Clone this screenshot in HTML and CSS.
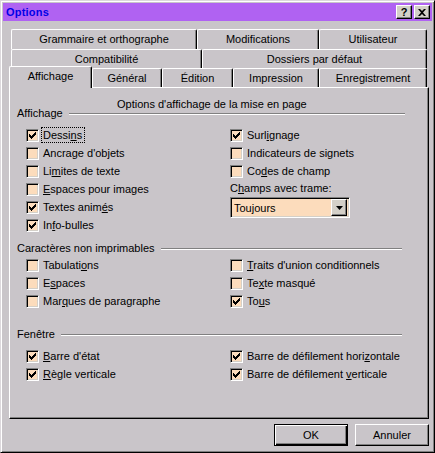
FILE: index.html
```html
<!DOCTYPE html>
<html lang="fr">
  <head>
    <meta charset="UTF-8" />
    <title>Options</title>
    <link rel="stylesheet" href="styles.css">
  </head>
  <body>
    <div class="window">
      <div class="titlebar">
        <span class="title">Options</span>
        <div class="title-buttons">
          <span class="tbtn tbtn-help">?</span>
          <span class="tbtn">
            <svg width="8" height="7" viewBox="0 0 8 7"><path d="M0 0h2l2 2 2-2h2L5 3.5 8 7H6L4 5 2 7H0l3-3.5z" /></svg>
          </span>
        </div>
      </div>

      <div class="tabs">
        <div class="tab-row row-top">
          <div class="tab w-gram">Grammaire et orthographe</div>
          <div class="tab w-modif">Modifications</div>
          <div class="tab w-user">Utilisateur</div>
        </div>
        <div class="tab-row row-mid">
          <div class="tab w-compat">Compatibilité</div>
          <div class="tab w-dossiers">Dossiers par défaut</div>
        </div>
        <div class="tab-row row-front">
          <div class="tab tab-active w-affichage">Affichage</div>
          <div class="tab w-general">Général</div>
          <div class="tab w-edition">Édition</div>
          <div class="tab w-impression">Impression</div>
          <div class="tab w-enreg">Enregistrement</div>
        </div>
      </div>

      <div class="panel">
        <div class="caption">Options d'affichage de la mise en page</div>

        <!-- Affichage -->
        <div class="group-head head-first"><span>Affichage</span><i class="rule"></i></div>
        <div class="columns cols-first">
          <div class="col">
            <div class="check">
              <span class="box"><svg width="7" height="7" viewBox="0 0 7 7"><path d="M0 2l2 2 5-5v3L2 7 0 5z" /></svg></span>
              <span class="focus">Dessi<u>n</u>s</span>
            </div>
            <div class="check"><span class="box"></span><span>Ancrage d'ob<u>j</u>ets</span></div>
            <div class="check"><span class="box"></span><span>Li<u>m</u>ites de texte</span></div>
            <div class="check"><span class="box"></span><span><u>E</u>spaces pour images</span></div>
            <div class="check">
              <span class="box"><svg width="7" height="7" viewBox="0 0 7 7"><path d="M0 2l2 2 5-5v3L2 7 0 5z" /></svg></span>
              <span>Textes anim<u>é</u>s</span>
            </div>
            <div class="check">
              <span class="box"><svg width="7" height="7" viewBox="0 0 7 7"><path d="M0 2l2 2 5-5v3L2 7 0 5z" /></svg></span>
              <span>In<u>f</u>o-bulles</span>
            </div>
          </div>
          <div class="col">
            <div class="check">
              <span class="box"><svg width="7" height="7" viewBox="0 0 7 7"><path d="M0 2l2 2 5-5v3L2 7 0 5z" /></svg></span>
              <span>Surl<u>i</u>gnage</span>
            </div>
            <div class="check"><span class="box"></span><span>Indicateurs de signets</span></div>
            <div class="check"><span class="box"></span><span>Co<u>d</u>es de champ</span></div>
            <div class="field-label">C<u>h</u>amps avec trame:</div>
            <div class="select">
              <span class="select-value">Toujours</span>
              <span class="select-arrow"><svg width="7" height="4" viewBox="0 0 7 4"><path d="M0 0h7L3.5 4z" /></svg></span>
            </div>
          </div>
        </div>

        <!-- Caractères non imprimables -->
        <div class="group-head head-chars"><span>Caractères non imprimables</span><i class="rule"></i></div>
        <div class="columns cols-chars">
          <div class="col">
            <div class="check"><span class="box"></span><span>Tabulati<u>o</u>ns</span></div>
            <div class="check"><span class="box"></span><span>E<u>s</u>paces</span></div>
            <div class="check"><span class="box"></span><span>Mar<u>q</u>ues de paragraphe</span></div>
          </div>
          <div class="col">
            <div class="check"><span class="box"></span><span><u>T</u>raits d'union conditionnels</span></div>
            <div class="check"><span class="box"></span><span>Te<u>x</u>te masqué</span></div>
            <div class="check">
              <span class="box"><svg width="7" height="7" viewBox="0 0 7 7"><path d="M0 2l2 2 5-5v3L2 7 0 5z" /></svg></span>
              <span>To<u>u</u>s</span>
            </div>
          </div>
        </div>

        <!-- Fenêtre -->
        <div class="group-head head-window"><span>Fenêtre</span><i class="rule"></i></div>
        <div class="columns cols-window">
          <div class="col">
            <div class="check">
              <span class="box"><svg width="7" height="7" viewBox="0 0 7 7"><path d="M0 2l2 2 5-5v3L2 7 0 5z" /></svg></span>
              <span><u>B</u>arre d'état</span>
            </div>
            <div class="check">
              <span class="box"><svg width="7" height="7" viewBox="0 0 7 7"><path d="M0 2l2 2 5-5v3L2 7 0 5z" /></svg></span>
              <span><u>R</u>ègle verticale</span>
            </div>
          </div>
          <div class="col">
            <div class="check">
              <span class="box"><svg width="7" height="7" viewBox="0 0 7 7"><path d="M0 2l2 2 5-5v3L2 7 0 5z" /></svg></span>
              <span>Barre de défilement hori<u>z</u>ontale</span>
            </div>
            <div class="check">
              <span class="box"><svg width="7" height="7" viewBox="0 0 7 7"><path d="M0 2l2 2 5-5v3L2 7 0 5z" /></svg></span>
              <span>Barre de défilement <u>v</u>erticale</span>
            </div>
          </div>
        </div>
      </div>

      <div class="actions">
        <button type="button" class="btn btn-default">OK</button>
        <button type="button" class="btn">Annuler</button>
      </div>
    </div>
  </body>
</html>
```

FILE: styles.css
```css
* {
  box-sizing: border-box;
}
body {
  margin: 0;
  font-family: "Liberation Sans", Arial, sans-serif;
  font-size: 11px;
  color: #000;
}
u {
  text-underline-offset: 1px;
}
.window {
  width: 435px;
  height: 453px;
  padding: 2px;
  background: #c9c5c9;
  border: 1px solid;
  border-color: #dcd8dc #000 #000 #dcd8dc;
  box-shadow: inset 1px 1px #fff, inset -1px -1px #808080;
}

/* title bar */
.titlebar {
  height: 18px;
  padding: 0 2px 0 3px;
  display: flex;
  align-items: center;
  justify-content: space-between;
  background: #b062f2;
}
.title {
  color: #0000e8;
  font-weight: bold;
  font-size: 11px;
  letter-spacing: 0.2px;
}
.title-buttons {
  display: flex;
  gap: 2px;
}
.tbtn {
  width: 16px;
  height: 14px;
  display: flex;
  align-items: center;
  justify-content: center;
  background: #d4d0c8;
  border: 1px solid;
  border-color: #fff #000 #000 #fff;
  box-shadow: inset -1px -1px #808080;
  font-weight: bold;
  font-size: 11px;
  line-height: 12px;
}

/* tabs */
.tabs {
  width: 416px;
  margin: 8px 0 0 8px;
}
.tab-row {
  display: flex;
}
.row-top {
  height: 20px;
}
.row-mid {
  height: 19px;
}
.row-front {
  height: 19px;
  align-items: flex-end;
}
.tab {
  flex: none;
  height: 100%;
  padding-top: 2px;
  text-align: center;
  line-height: 15px;
  border-left: 1px solid #fff;
  border-top: 1px solid #fff;
  border-right: 1px solid #000;
  border-radius: 2px 2px 0 0;
  box-shadow: inset -1px 0 #808080;
  background: #c9c5c9;
}
.tab-active {
  position: relative;
  z-index: 1;
  height: 22px;
  margin-left: -2px;
  margin-bottom: -1px;
  padding-top: 2px;
}
.w-gram { width: 186px; }
.w-modif { width: 122px; }
.w-user { width: 108px; }
.w-compat { width: 191px; }
.w-dossiers { width: 225px; }
.w-affichage { width: 83px; }
.w-general { width: 70px; }
.w-edition { width: 71px; }
.w-impression { width: 86px; }
.w-enreg { width: 108px; }

/* page */
.panel {
  width: 420px;
  height: 332px;
  margin-left: 6px;
  padding-top: 10px;
  border: 1px solid;
  border-color: #fff #000 #000 #fff;
  box-shadow: inset -1px -1px #808080;
}
.caption {
  padding-left: 107px;
  line-height: 12px;
  margin-bottom: -3px;
}
.group-head {
  display: flex;
  align-items: center;
  padding-left: 7px;
  margin-right: 26px;
  line-height: 12px;
}
.head-first {
  margin-right: 23px;
}
.head-chars {
  margin-top: 8px;
}
.head-window {
  margin-top: 18px;
}
.rule {
  flex: 1;
  height: 2px;
  margin: 1px 0 0 6px;
  border-top: 1px solid #808080;
  border-bottom: 1px solid #fff;
}
.columns {
  display: grid;
  grid-template-columns: 204px 1fr;
  padding-left: 16px;
}
.cols-first {
  margin-top: 7px;
}
.cols-chars {
  margin-top: 2px;
}
.cols-window {
  margin-top: 7px;
}
.col {
  display: flex;
  flex-direction: column;
}
.check {
  height: 18px;
  display: flex;
  align-items: center;
  gap: 4px;
  white-space: nowrap;
}
.box {
  flex: none;
  width: 13px;
  height: 13px;
  padding: 2px 0 0 2px;
  background: #fcdcbc;
  border: 1px solid;
  border-color: #808080 #fff #fff #808080;
  box-shadow: inset 1px 1px #000, inset -1px -1px #d4d0c8;
}
.box svg {
  display: block;
  shape-rendering: crispEdges;
}
.focus {
  outline: 1px dotted #000;
  outline-offset: 1px;
  padding: 0 1px 0 0;
}
.field-label {
  height: 17px;
  line-height: 17px;
}
.select {
  width: 120px;
  height: 21px;
  display: flex;
  align-items: center;
  justify-content: space-between;
  padding: 0 2px 0 3px;
  background: #fcdcbc;
  border: 1px solid;
  border-color: #808080 #fff #fff #808080;
  box-shadow: inset 1px 1px #000, inset -1px -1px #d4d0c8;
}
.select-arrow {
  width: 16px;
  height: 17px;
  display: flex;
  align-items: center;
  justify-content: center;
  background: #d4d0c8;
  border: 1px solid;
  border-color: #fff #000 #000 #fff;
  box-shadow: inset -1px -1px #808080;
}

/* buttons */
.actions {
  margin-top: 5px;
  padding-right: 3px;
  display: flex;
  justify-content: flex-end;
  gap: 7px;
}
.btn {
  width: 74px;
  height: 22px;
  padding: 0;
  font-family: "Liberation Sans", Arial, sans-serif;
  font-size: 11px;
  color: #000;
  background: #c9c5c9;
  border: 1px solid;
  border-color: #fff #000 #000 #fff;
  box-shadow: inset -1px -1px #808080;
}
.btn-default {
  border-color: #000;
  box-shadow: inset 1px 1px #fff, inset -1px -1px #000, inset -2px -2px #808080;
}
```
